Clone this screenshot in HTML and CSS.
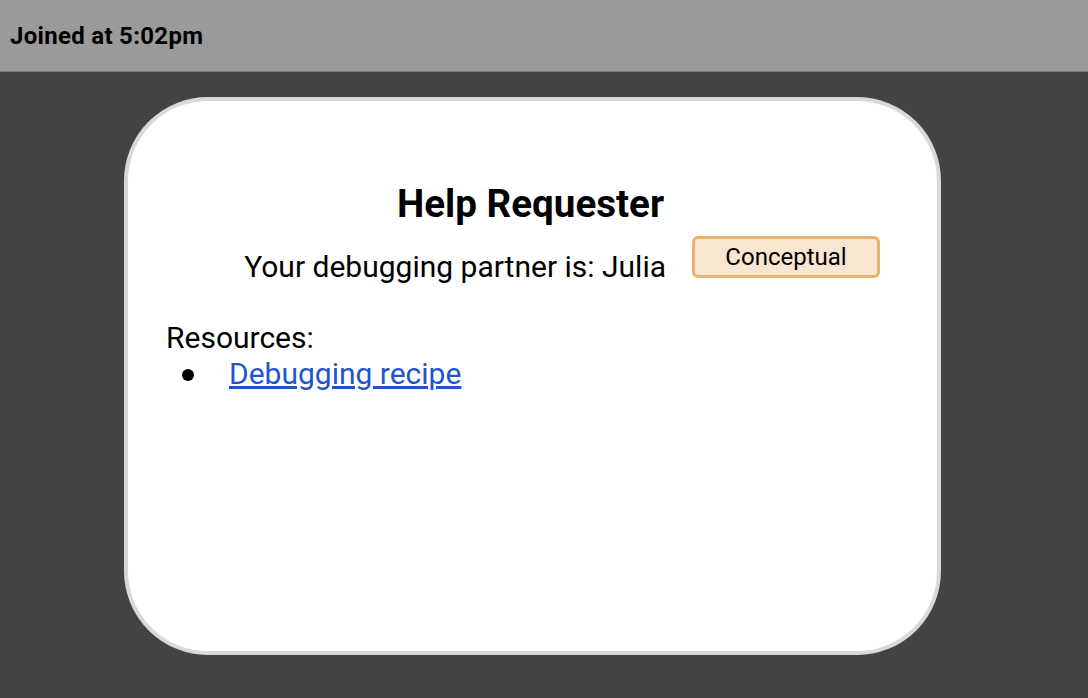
FILE: index.html
```html
<!DOCTYPE html>
<html>
<head>
<meta charset="utf-8">
<link rel="stylesheet" href="styles.css">
</head>
<body>
<header class="topbar">
  <span class="joined">Joined at 5:02pm</span>
</header>
<main class="stage">
  <section class="card">
    <h1 class="title">Help Requester</h1>
    <div class="partner-row">
      <p class="partner">Your debugging partner is: Julia</p>
      <span class="badge">Conceptual</span>
    </div>
    <div class="resources">
      <p class="res-label">Resources:</p>
      <ul class="res-list">
        <li class="res-item"><a href="#" class="res-link">Debugging recipe</a></li>
      </ul>
    </div>
  </section>
</main>
</body>
</html>
```

FILE: styles.css
```css
* { box-sizing: border-box; }
html, body {
  margin: 0;
  padding: 0;
  height: 100%;
}
body {
  font-family: Roboto, "Liberation Sans", sans-serif;
  background: #434343;
  color: #000;
  display: flex;
  flex-direction: column;
}
.topbar {
  height: 72px;
  background: #9a9a9a;
  border-bottom: 1px solid #7e7e7e;
  display: flex;
  align-items: center;
  padding-left: 10px;
}
.joined {
  font-weight: 700;
  font-size: 24px;
  line-height: 28px;
  letter-spacing: 0.3px;
}
.stage {
  flex: 1;
  padding: 25px 147px 0 124px;
}
.card {
  width: 817px;
  height: 558px;
  background: #fff;
  border: 4px solid #d9d9d9;
  border-radius: 84px;
  padding: 81px 42px 0 38px;
}
.title {
  margin: 0;
  text-align: center;
  font-size: 38.6px;
  font-weight: 700;
  line-height: 44px;
}
.partner-row {
  display: grid;
  grid-template-columns: 1fr 188px;
  column-gap: 26px;
  align-items: start;
  margin-top: 23px;
  padding-right: 15px;
}
.partner {
  margin: 0;
  text-align: right;
  font-size: 30px;
  line-height: 36px;
}
.badge {
  margin-top: -13px;
  height: 42px;
  background: #f9e6d1;
  border: 3px solid #e8b271;
  border-radius: 6px;
  font-size: 24px;
  display: flex;
  align-items: center;
  justify-content: center;
}
.resources {
  margin-top: 35px;
}
.res-label {
  margin: 0;
  font-size: 30px;
  line-height: 36px;
}
.res-list {
  margin: 0;
  padding-left: 16px;
  list-style: none;
  font-size: 30px;
  line-height: 36px;
}
.res-item {
  display: flex;
  align-items: center;
}
.res-item::before {
  content: "";
  width: 12px;
  height: 12px;
  border-radius: 50%;
  background: #000;
  margin-right: 35px;
  margin-top: 2px;
}
.res-link {
  color: #1f55cc;
  text-decoration: underline;
}
```
